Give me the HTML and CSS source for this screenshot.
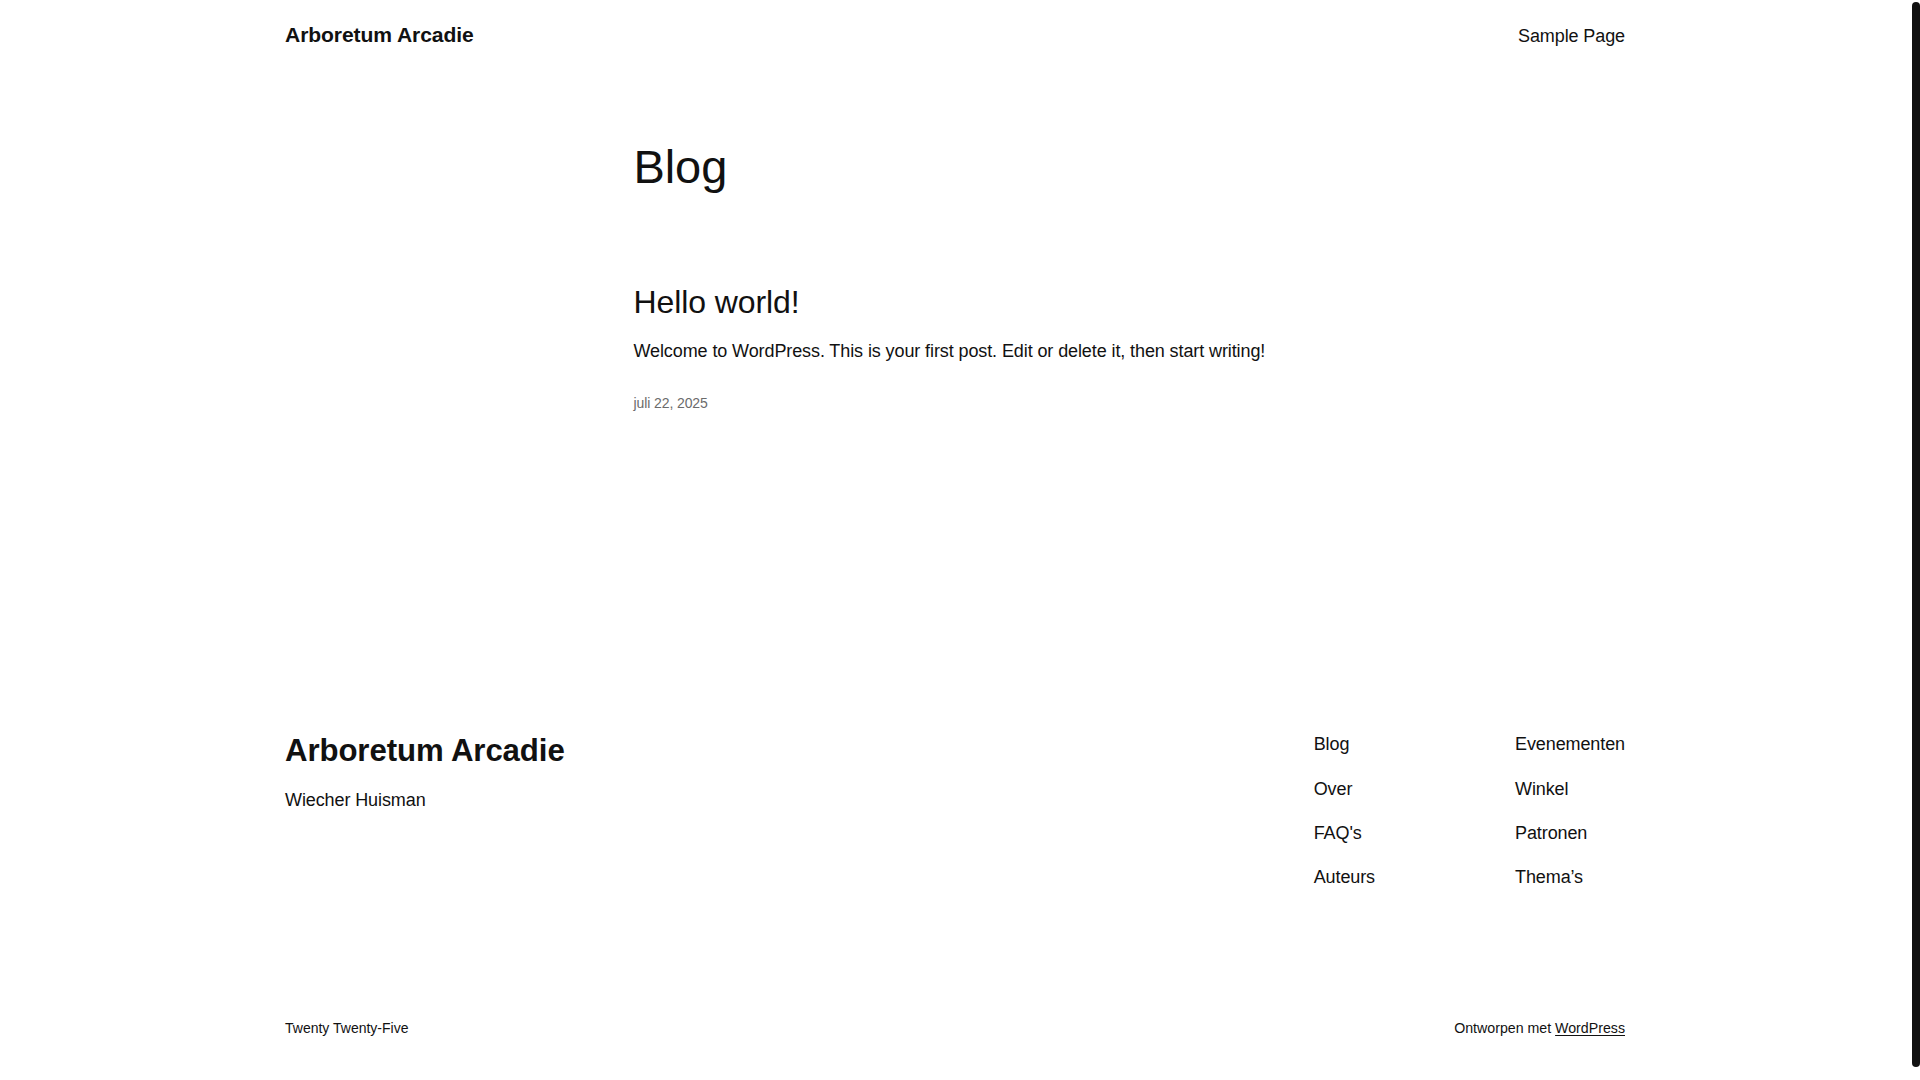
FILE: index.html
```html
<!DOCTYPE html>
<html lang="nl">
<head>
<meta charset="utf-8">
<title>Blog – Arboretum Arcadie</title>
<link rel="stylesheet" href="styles.css">
</head>
<body>
<div class="page">
  <header class="site-header wide">
    <a class="site-title" href="#">Arboretum Arcadie</a>
    <nav class="header-nav"><a href="#">Sample Page</a></nav>
  </header>

  <main class="content">
    <h1 class="page-title">Blog</h1>
    <article class="post">
      <h2 class="post-title"><a href="#">Hello world!</a></h2>
      <p class="excerpt">Welcome to WordPress. This is your first post. Edit or delete it, then start writing!</p>
      <div class="post-date">juli 22, 2025</div>
    </article>
  </main>

  <footer class="site-footer wide">
    <div class="footer-top">
      <div class="brand">
        <div class="footer-title">Arboretum Arcadie</div>
        <p class="tagline">Wiecher Huisman</p>
      </div>
      <div class="footer-navs">
        <ul class="footer-menu">
          <li><a href="#">Blog</a></li>
          <li><a href="#">Over</a></li>
          <li><a href="#">FAQ's</a></li>
          <li><a href="#">Auteurs</a></li>
        </ul>
        <ul class="footer-menu">
          <li><a href="#">Evenementen</a></li>
          <li><a href="#">Winkel</a></li>
          <li><a href="#">Patronen</a></li>
          <li><a href="#">Thema’s</a></li>
        </ul>
      </div>
    </div>
    <div class="footer-bottom">
      <span>Twenty Twenty-Five</span>
      <span class="credit-line">Ontworpen met <a class="credit" href="#">WordPress</a></span>
    </div>
  </footer>
</div>
<div class="scrollbar"></div>
</body>
</html>
```

FILE: styles.css
```css
html {
  overflow: hidden;
}

body {
  margin: 0;
  background: #ffffff;
  color: #111111;
  font-family: "Liberation Sans", Arial, sans-serif;
  font-size: 18px;
  letter-spacing: -0.1px;
}

a {
  color: inherit;
  text-decoration: none;
}

.page {
  margin-right: 10px;
}

.wide {
  max-width: 1340px;
  margin-left: auto;
  margin-right: auto;
}

/* Header */
.site-header {
  display: flex;
  justify-content: space-between;
  align-items: baseline;
  padding-top: 20px;
}

.site-title {
  font-size: 21.1px;
  font-weight: 700;
  line-height: 29px;
}

.header-nav a {
  font-size: 18px;
  line-height: 25.2px;
}

/* Main */
.content {
  width: 645px;
  margin-left: calc(50% - 321.5px);
}

.page-title {
  margin: 90px 0 0;
  font-size: 47px;
  font-weight: 400;
  line-height: 56.4px;
}

.post {
  margin-top: 87px;
}

.post-title {
  margin: 0;
  font-size: 32px;
  font-weight: 400;
  line-height: 38.4px;
}

.excerpt {
  margin: 16px 0 0;
  font-size: 18px;
  line-height: 28.8px;
}

.post-date {
  margin-top: 28px;
  font-size: 14px;
  line-height: 19.6px;
  color: #6b6b6b;
}

/* Footer */
.site-footer {
  margin-top: 317px;
}

.footer-top {
  display: flex;
  justify-content: space-between;
  align-items: flex-start;
}

.brand {
  margin-top: 2px;
}

.footer-title {
  font-size: 31.2px;
  font-weight: 700;
  line-height: 37.2px;
}

.tagline {
  margin: 16.6px 0 0;
  font-size: 18px;
  line-height: 28.8px;
}

.footer-navs {
  display: flex;
  gap: 140px;
}

.footer-menu {
  list-style: none;
  margin: 0;
  padding: 0;
  display: flex;
  flex-direction: column;
  gap: 15.4px;
  font-size: 18px;
  line-height: 28.8px;
}

.footer-bottom {
  display: flex;
  justify-content: space-between;
  margin-top: 127px;
  font-size: 14px;
  line-height: 19.6px;
  letter-spacing: 0;
}

.credit-line {
  font-size: 14.2px;
}

.credit {
  text-decoration: underline;
  text-underline-offset: 0.15em;
  text-decoration-thickness: 1px;
}

/* Overlay scrollbar thumb */
.scrollbar {
  position: fixed;
  top: 2px;
  right: 0;
  width: 8px;
  height: 1065px;
  background: #111111;
  border-radius: 4px;
}
```
